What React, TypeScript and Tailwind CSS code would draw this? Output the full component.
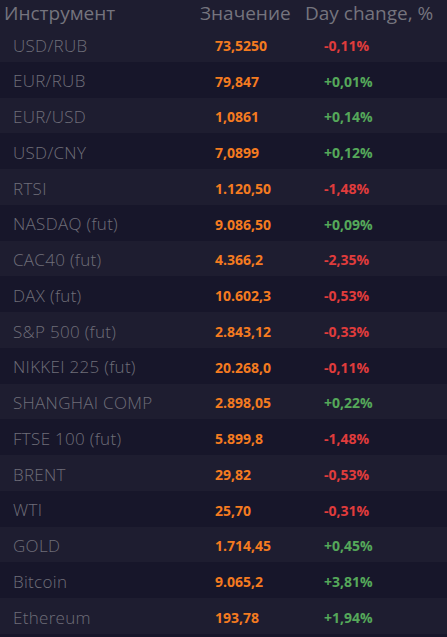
import React from 'react';

interface Quote {
  name: string;
  value: string;
  change: string;
}

const quotes: Quote[] = [
  { name: 'USD/RUB', value: '73,5250', change: '-0,11%' },
  { name: 'EUR/RUB', value: '79,847', change: '+0,01%' },
  { name: 'EUR/USD', value: '1,0861', change: '+0,14%' },
  { name: 'USD/CNY', value: '7,0899', change: '+0,12%' },
  { name: 'RTSI', value: '1.120,50', change: '-1,48%' },
  { name: 'NASDAQ (fut)', value: '9.086,50', change: '+0,09%' },
  { name: 'CAC40 (fut)', value: '4.366,2', change: '-2,35%' },
  { name: 'DAX (fut)', value: '10.602,3', change: '-0,53%' },
  { name: 'S&P 500 (fut)', value: '2.843,12', change: '-0,33%' },
  { name: 'NIKKEI 225 (fut)', value: '20.268,0', change: '-0,11%' },
  { name: 'SHANGHAI COMP', value: '2.898,05', change: '+0,22%' },
  { name: 'FTSE 100 (fut)', value: '5.899,8', change: '-1,48%' },
  { name: 'BRENT', value: '29,82', change: '-0,53%' },
  { name: 'WTI', value: '25,70', change: '-0,31%' },
  { name: 'GOLD', value: '1.714,45', change: '+0,45%' },
  { name: 'Bitcoin', value: '9.065,2', change: '+3,81%' },
  { name: 'Ethereum', value: '193,78', change: '+1,94%' },
];

const App = () => {
  return (
    <div className="w-[447px] h-[637px] bg-[#17162a] overflow-hidden font-['Open_Sans',sans-serif]">
      <div className="grid grid-cols-[196px_109px_1fr] h-[26px] items-center bg-[#1e1d30] text-[19px] text-[#75747e] leading-none">
        <span className="pl-1">Инструмент</span>
        <span className="pl-1">Значение</span>
        <span>Day change, %</span>
      </div>
      {quotes.map((q, index) => (
        <div
          key={index}
          className={`grid grid-cols-[215px_109px_1fr] h-[35.75px] pt-[3px] items-center ${
            index % 2 === 0 ? 'bg-[#1e1d30]' : 'bg-[#17162a]'
          }`}
        >
          <span className="pl-[13px] text-[17px] font-light text-[#6f6e79] tracking-[0.3px]">{q.name}</span>
          <span className="text-[14px] font-bold text-[#f47b20]">{q.value}</span>
          <span
            className={`text-[14px] font-bold ${
              q.change.startsWith('-') ? 'text-[#e03c3c]' : 'text-[#55a85a]'
            }`}
          >
            {q.change}
          </span>
        </div>
      ))}
    </div>
  );
};

export default App;
